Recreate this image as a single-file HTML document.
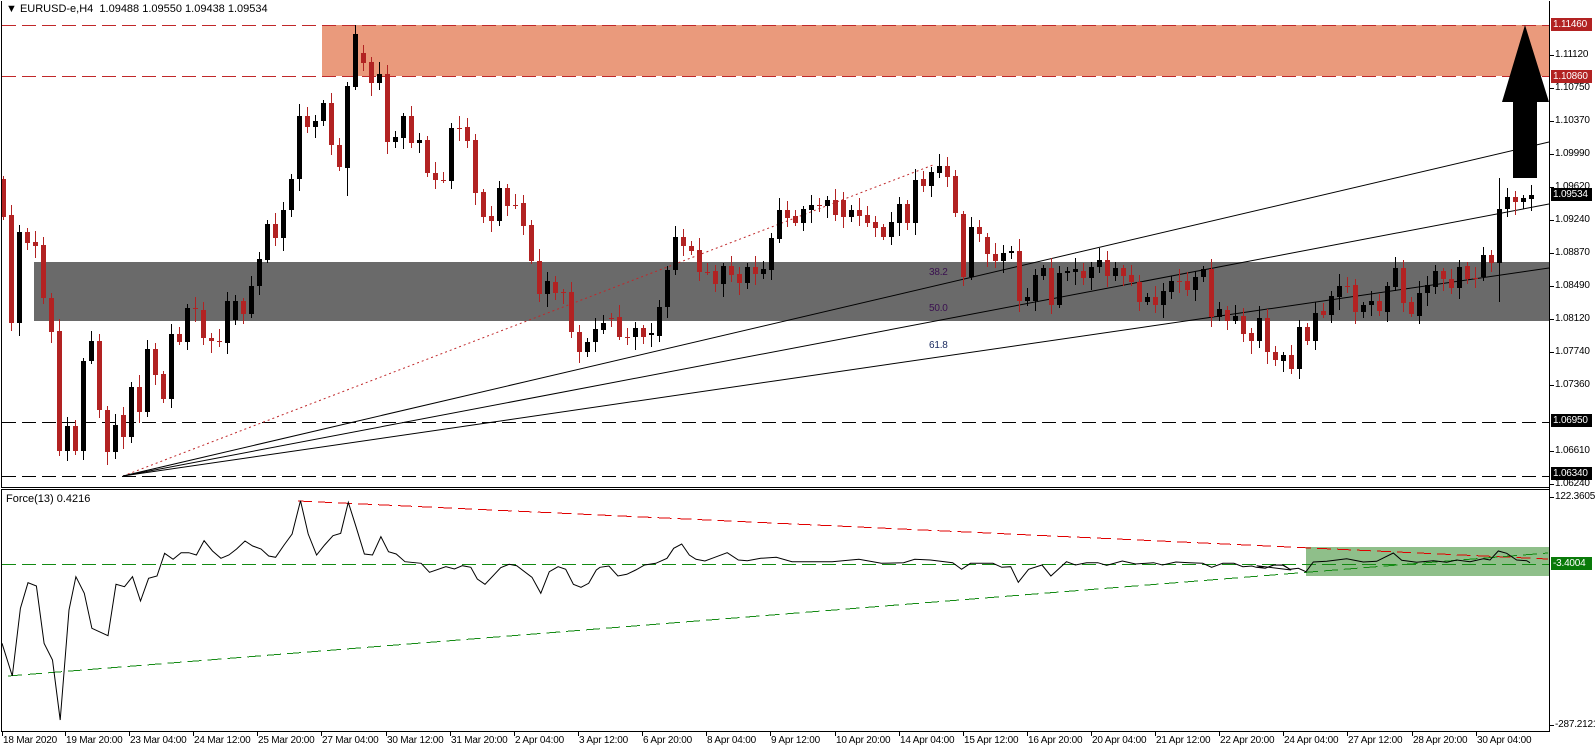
<!DOCTYPE html>
<html><head><meta charset="utf-8"><style>
body{margin:0;width:1595px;height:752px;background:#fff;overflow:hidden;font-family:"Liberation Sans",sans-serif;}
#c{position:absolute;left:0;top:0}
.t{position:absolute;font-size:10px;color:#000;white-space:nowrap;line-height:13px;letter-spacing:-0.2px}
.b{position:absolute;font-size:10px;color:#fff;white-space:nowrap;line-height:13px;padding:0 2px;left:1551px;width:37px;letter-spacing:-0.2px}
</style></head><body>
<svg id="c" width="1595" height="752" xmlns="http://www.w3.org/2000/svg"></svg>
<div class="t" style="left:6px;top:3px;font-size:11px;letter-spacing:0">&#9660; EURUSD-e,H4&nbsp; 1.09488 1.09550 1.09438 1.09534</div>
<div class="t" style="left:6px;top:493px;font-size:11px;letter-spacing:0">Force(13) 0.4216</div>
<div class="t" style="left:929px;top:266px;color:#3a1050">38.2</div>
<div class="t" style="left:929px;top:302px;color:#3a1050">50.0</div>
<div class="t" style="left:929px;top:339px;color:#1a2a60">61.8</div>
<div id="lab"></div>
<script>
(function(){
var s=document.getElementById('c'),h='';
function L(x1,y1,x2,y2,c,w,d){h+='<line x1="'+x1+'" y1="'+y1+'" x2="'+x2+'" y2="'+y2+'" stroke="'+c+'" stroke-width="'+(w||1)+'"'+(d?' stroke-dasharray="'+d+'"':'')+' shape-rendering="crispEdges"/>';}
function R(x,y,w,hh,c){h+='<rect x="'+x+'" y="'+y+'" width="'+w+'" height="'+hh+'" fill="'+c+'"/>';}
R(322,25,1228,51,'#ea9a7c');
R(34,262,1516,59,'#6a6a6a');
L(2,25.5,1550,25.5,'#c0282a',1,'14,6');L(2,76.5,1550,76.5,'#c0282a',1,'14,6');
L(2,422.5,1550,422.5,'#000',1,'14,6');L(2,476.5,1550,476.5,'#000',1,'14,6');
h+='<line x1="123" y1="476" x2="933" y2="165" stroke="#c0282a" stroke-width="1" stroke-dasharray="2,3"/>';
h+='<line x1="123" y1="476" x2="1549" y2="142" stroke="#000" stroke-width="1"/>';
h+='<line x1="123" y1="476" x2="1549" y2="204" stroke="#000" stroke-width="1"/>';
h+='<line x1="123" y1="476" x2="1549" y2="268" stroke="#000" stroke-width="1"/>';
var d=[[179,217],[215,323],[323,232],[232,243],[242,246],[245,298],[298,332],[331,451],[451,426],[426,451],[451,361],[361,341],[341,410],[410,452],[452,425],[415,437],[437,387],[387,412],[412,349],[349,375],[374,399],[399,334],[334,342],[342,308],[308,309],[310,338],[338,341],[341,341],[343,301],[320,301],[301,314],[314,286],[286,259],[260,224],[224,238],[238,210],[210,179],[179,116],[116,127],[127,121],[121,103],[103,145],[145,167],[168,86],[87,34],[53,63],[62,83],[83,74],[74,142],
[142,137],[138,116],[116,143],[143,140],[140,173],[173,180],[180,180],[181,128],[128,128],[127,141],[140,193],[192,217],[216,221],[221,188],[188,206],[205,205],[203,226],
[225,261],[261,294],[294,281],[282,293],[292,292],[292,332],[332,352],[352,342],[342,329],[330,323],[318,318],[317,337],[337,337],[337,328],[328,337],[335,333],[336,307],[307,270],[270,237],[237,246],[246,251],[250,272],[272,272],[271,284],[284,266],[266,275],[274,283],[283,267],[267,274],[274,269],[270,238],[239,210],[210,218],[216,223],[223,209],[210,205],[205,205],[206,200],[200,215],[200,217],[217,210],[210,216],[215,223],[222,228],[227,237],[237,222],[223,204],[204,223],[223,180],[179,186],[186,172],[173,166],[166,177],[176,213],[214,277],[277,227],[227,234],[237,254],[254,261],[261,253],
[253,251],[251,301],[301,297],[301,275],[276,268],[268,305],[305,273],[273,271],[272,269],[271,278],[278,267],[267,260],[260,276],[276,268],[268,276],[275,282],[282,302],[302,297],[297,305],[305,291],[292,281],[281,281],[281,290],[290,277],[277,269],[269,317],[317,309],[310,321],[321,316],[316,334],[333,341],[341,318],[318,352],[352,360],[361,355],[355,369],[369,327],[327,341],[341,313],[311,315],[315,296],[297,286],[286,286],[285,312],[312,305],[305,301],[301,311],[312,286],[287,268],[268,303],[302,314],[316,293],[293,285],[287,271],[271,279],[279,288],[288,267],[266,279],[278,278],[277,255],[255,263],[263,209],[209,197],[197,202],[202,198],[199,195]];
var N=d.length,i;
for(i=0;i<N;i++){var x=1531-8*(N-1-i),o=d[i][0],c=d[i][1];
 var tp=Math.min(o,c),bt=Math.max(o,c);
 var hi=tp-(3+(i*7)%10),lo=bt+(3+(i*5)%11);
 if(i==N-5){hi=178;lo=302;}
 if(i==44){hi=25;} if(i==43){lo=196;}
 var col=(c<o)?'#000':'#b22222';
 L(x+0.5,hi,x+0.5,lo,col,1);
 R(x-2,tp,5,Math.max(bt-tp,1),col);}
h+='<polygon points="1525,25 1549,102 1537,102 1537,178 1513,178 1513,102 1502,102" fill="#000"/>';
R(1,1,1,486,'#000');R(1549,1,1,731,'#000');R(1,487,1549,1,'#000');R(1,489,1549,1,'#000');R(1,731,1549,1,'#000');R(1,489,1,242,'#000');
R(1306,547,243,29,'#8fbf8a');
L(2,564.5,1549,564.5,'#138a13',1,'14,6');
L(298,501,1548,559,'#e00000',1,'14,6');
L(8,676,1548,553,'#138a13',1,'14,6');
var z3=[0,520,27,618,48,415,68,338,90,348,110,520,132,570,152,750,175,420,193,320,215,370,235,475,277,497,298,343,320,350,341,320,362,393,383,325,405,318,425,250,447,268,468,248,488,248,508,255,528,212,550,243,572,265,593,255,613,237,635,213,655,228,677,237,697,258,715,262,737,225,758,192,780,92,800,192,822,255,843,225,865,197,885,190,905,97,925,170,947,252,968,255,990,200,1010,245,1030,252,1053,275,1095,280,1117,307,1160,290,1182,297,1203,287,1225,292,1242,327,1262,343,1303,293,1325,283,1345,287,1385,322,1408,370,1430,305,1453,290,1473,298,1493,343,1513,352,1533,340,1553,300];
var z5=[0,262,20,258,40,288,60,283,80,270,100,255,125,250,150,235,165,205,183,192,200,225,215,238,235,243,255,233,285,218,310,240,330,242,360,235,395,232,430,245,520,245,580,238,630,250,680,248,705,238,740,240,790,248,810,268,830,250,880,250,900,262,920,260,937,307,960,268,990,255,1010,288,1045,245,1065,255,1090,248,1115,248,1135,256,1170,243,1200,252,1240,248,1260,255,1290,246,1320,248,1350,250,1370,262,1395,250,1420,250,1440,260,1460,258,1470,262,1490,265,1510,255,1530,256,1548,270];
var z4=[20,257,45,265,70,255,100,255,120,268,145,265,168,275,190,246,230,244,290,236,340,246,380,244,430,219,455,241,500,247,550,242,590,247,620,240,660,245,700,236,720,240,745,213,770,220,800,240,830,242,840,248];
var p=[];
for(i=0;i<z3.length;i+=2)p.push((2+z3[i]/2.613).toFixed(1)+','+(470+z3[i+1]/3).toFixed(1));
for(i=0;i<z5.length;i+=2)p.push((600+z5[i]/2.24).toFixed(1)+','+(480+z5[i+1]/3).toFixed(1));
for(i=0;i<z4.length;i+=2)p.push((1250+z4[i]/3).toFixed(1)+','+(480+z4[i+1]/3).toFixed(1));
h+='<polyline points="'+p.join(' ')+'" fill="none" stroke="#000" stroke-width="1"/>';
var tx=[2,65,129,193,257,321,386,450,514,578,642,706,770,835,899,963,1027,1091,1155,1219,1283,1347,1412,1476];
var tl=['18 Mar 2020','19 Mar 20:00','23 Mar 04:00','24 Mar 12:00','25 Mar 20:00','27 Mar 04:00','30 Mar 12:00','31 Mar 20:00','2 Apr 04:00','3 Apr 12:00','6 Apr 20:00','8 Apr 04:00','9 Apr 12:00','10 Apr 20:00','14 Apr 04:00','15 Apr 12:00','16 Apr 20:00','20 Apr 04:00','21 Apr 12:00','22 Apr 20:00','24 Apr 04:00','27 Apr 12:00','28 Apr 20:00','30 Apr 04:00'];
var lab='';
for(i=0;i<tx.length;i++){R(tx[i],732,1,4,'#000');lab+='<div class="t" style="left:'+(tx[i]+1)+'px;top:734px">'+tl[i]+'</div>';}
var pl=[['1.11120',55],['1.10750',88],['1.10370',121],['1.09990',154],['1.09620',187],['1.09240',220],['1.08870',253],['1.08490',286],['1.08120',319],['1.07740',352],['1.07360',385],['1.06610',451],['1.06240',484],['122.3605',497],['-287.2121',725]];
for(i=0;i<pl.length;i++){R(1550,pl[i][1],4,1,'#000');lab+='<div class="t" style="left:1555px;top:'+(pl[i][1]-7)+'px">'+pl[i][0]+'</div>';}
var bx=[['1.11460',25,'#b22222'],['1.10860',77,'#b22222'],['1.09534',195,'#000'],['1.06950',421,'#000'],['1.06340',474,'#000'],['-3.4004',564,'#0a7a0a']];
for(i=0;i<bx.length;i++){lab+='<div class="b" style="top:'+(bx[i][1]-7)+'px;background:'+bx[i][2]+'">'+bx[i][0]+'</div>';}
s.innerHTML=h;document.getElementById('lab').innerHTML=lab;
})();
</script>
</body></html>
